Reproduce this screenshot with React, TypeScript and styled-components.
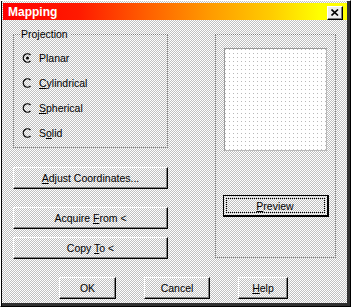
import React from 'react';
import styled, { createGlobalStyle } from 'styled-components';

const dither = `repeating-conic-gradient(#c0c0c0 0% 25%, #ffffff 0% 50%) 0 0 / 2px 2px fixed`;

const GlobalStyle = createGlobalStyle`
  html, body {
    margin: 0;
    padding: 0;
    background: #fff;
  }
  body {
    font-family: "Liberation Sans", Arial, sans-serif;
    font-size: 10.5px;
    color: #000;
  }
`;

const Window = styled.div`
  width: 351px;
  height: 307px;
  box-sizing: border-box;
  border-style: solid;
  border-width: 1px;
  border-color: #fff #000 #000 #fff;
  box-shadow: inset 1px 0 #000, inset -3px -3px #303030;
  padding: 2px 3px 3px 2px;
  background: ${dither};
  display: flex;
  flex-direction: column;
`;

const TitleBar = styled.div`
  height: 17px;
  display: flex;
  align-items: center;
  justify-content: space-between;
  padding-left: 5px;
  background: linear-gradient(90deg, #ff0000 0%, #ff1a00 22%, #ff6000 42%, #ff9a00 60%, #ffcc00 78%, #ffff00 92%, #ffff00 100%);
`;

const Title = styled.span`
  color: #fff;
  font-weight: bold;
  font-size: 12px;
`;

const CloseButton = styled.div`
  width: 16px;
  height: 14px;
  box-sizing: border-box;
  margin-right: 4px;
  margin-top: 2px;
  background: #ececec;
  border-style: solid;
  border-width: 1px;
  border-color: #fff #000 #000 #fff;
  box-shadow: inset -1px -1px #808080;
  display: flex;
  align-items: center;
  justify-content: center;
`;

const Body = styled.div`
  display: grid;
  grid-template-columns: 155px 121px;
  column-gap: 47px;
  padding: 14px 0 0 10px;
`;

const Column = styled.div`
  display: flex;
  flex-direction: column;
  align-items: stretch;
`;

const GroupBox = styled.div<{ $height: number }>`
  position: relative;
  height: ${p => p.$height}px;
  box-sizing: border-box;
  border: 1px dotted #808080;
  display: flex;
  flex-direction: column;
`;

const GroupLabel = styled.span`
  position: absolute;
  top: -7px;
  left: 6px;
  padding: 0 2px 0 1px;
  line-height: 13px;
  background: ${dither};
`;

const RadioList = styled.div`
  padding: 10px 0 2px 8px;
  display: flex;
  flex-direction: column;
`;

const RadioRow = styled.label`
  height: 25px;
  display: flex;
  align-items: center;
  gap: 6px;
`;

const Button = styled.div<{ $width?: number; $mt?: number }>`
  width: ${p => (p.$width ? `${p.$width}px` : 'auto')};
  height: 22px;
  margin-top: ${p => p.$mt ?? 0}px;
  box-sizing: border-box;
  border-style: solid;
  border-width: 1px;
  border-color: #fff #000 #000 #fff;
  box-shadow: inset -1px -1px #808080;
  display: flex;
  align-items: center;
  justify-content: center;
  padding-bottom: 1px;
`;

const DefaultButton = styled.div`
  width: 106px;
  height: 22px;
  margin-top: 44px;
  box-sizing: border-box;
  border: 1px solid #000;
  border-right-width: 2px;
  border-bottom-width: 2px;
  padding: 2px;
  display: flex;
`;

const FocusRing = styled.div`
  flex: 1;
  border: 1px dotted #000;
  display: flex;
  align-items: center;
  justify-content: center;
`;

const PreviewArea = styled.div`
  width: 103px;
  height: 103px;
  box-sizing: border-box;
  margin-top: 13px;
  border: 1px solid #9a9a9a;
  border-right-color: #b8b8b8;
  border-bottom-color: #b8b8b8;
  background: conic-gradient(from 270deg at 1px 1px, #b8b8b8 25%, #ffffff 0) 0 0 / 4px 4px;
`;

const RightGroupInner = styled.div`
  display: flex;
  flex-direction: column;
  align-items: center;
`;

const BottomRow = styled.div`
  grid-column: 1 / -1;
  display: flex;
  gap: 28px;
  margin-top: 18px;
  padding-left: 46px;
`;

// win95 radio: only the dark upper-left arc shows on the dithered face
const Radio = ({ checked }: { checked?: boolean }) => (
  <svg width="11" height="12" viewBox="0 0 11 12">
    <path d="M8.47 3.03 A4.2 4.2 0 1 0 8.47 8.97" fill="none" stroke="#000" strokeWidth="1.3" />
    {checked && <circle cx="5.5" cy="6" r="1.5" fill="#000" />}
  </svg>
);

const CloseGlyph = () => (
  <svg width="8" height="7" viewBox="0 0 8 7">
    <path d="M0.5 0.5 L7 6.5 M7 0.5 L0.5 6.5" stroke="#000" strokeWidth="1.6" />
  </svg>
);

const radios = [
  { key: 'planar', label: <>Planar</>, checked: true },
  { key: 'cyl', label: <><u>C</u>ylindrical</> },
  { key: 'sph', label: <><u>S</u>pherical</> },
  { key: 'solid', label: <>S<u>o</u>lid</> },
];

export default function App() {
  return (
    <>
      <GlobalStyle />
      <Window>
        <TitleBar>
          <Title>Mapping</Title>
          <CloseButton><CloseGlyph /></CloseButton>
        </TitleBar>
        <Body>
          <Column>
            <GroupBox $height={114}>
              <GroupLabel>Projection</GroupLabel>
              <RadioList>
                {radios.map(r => (
                  <RadioRow key={r.key}>
                    <Radio checked={r.checked} />
                    <span>{r.label}</span>
                  </RadioRow>
                ))}
              </RadioList>
            </GroupBox>
            <Button $mt={19}><span><u>A</u>djust Coordinates...</span></Button>
            <Button $mt={18}><span>Acquire <u>F</u>rom &lt;</span></Button>
            <Button $mt={8}><span>Copy <u>T</u>o &lt;</span></Button>
          </Column>
          <Column>
            <GroupBox $height={224}>
              <RightGroupInner>
                <PreviewArea />
                <DefaultButton>
                  <FocusRing><span><u>P</u>review</span></FocusRing>
                </DefaultButton>
              </RightGroupInner>
            </GroupBox>
          </Column>
          <BottomRow>
            <Button $width={57}>OK</Button>
            <Button $width={66}>Cancel</Button>
            <Button $width={50}><span><u>H</u>elp</span></Button>
          </BottomRow>
        </Body>
      </Window>
    </>
  );
}
